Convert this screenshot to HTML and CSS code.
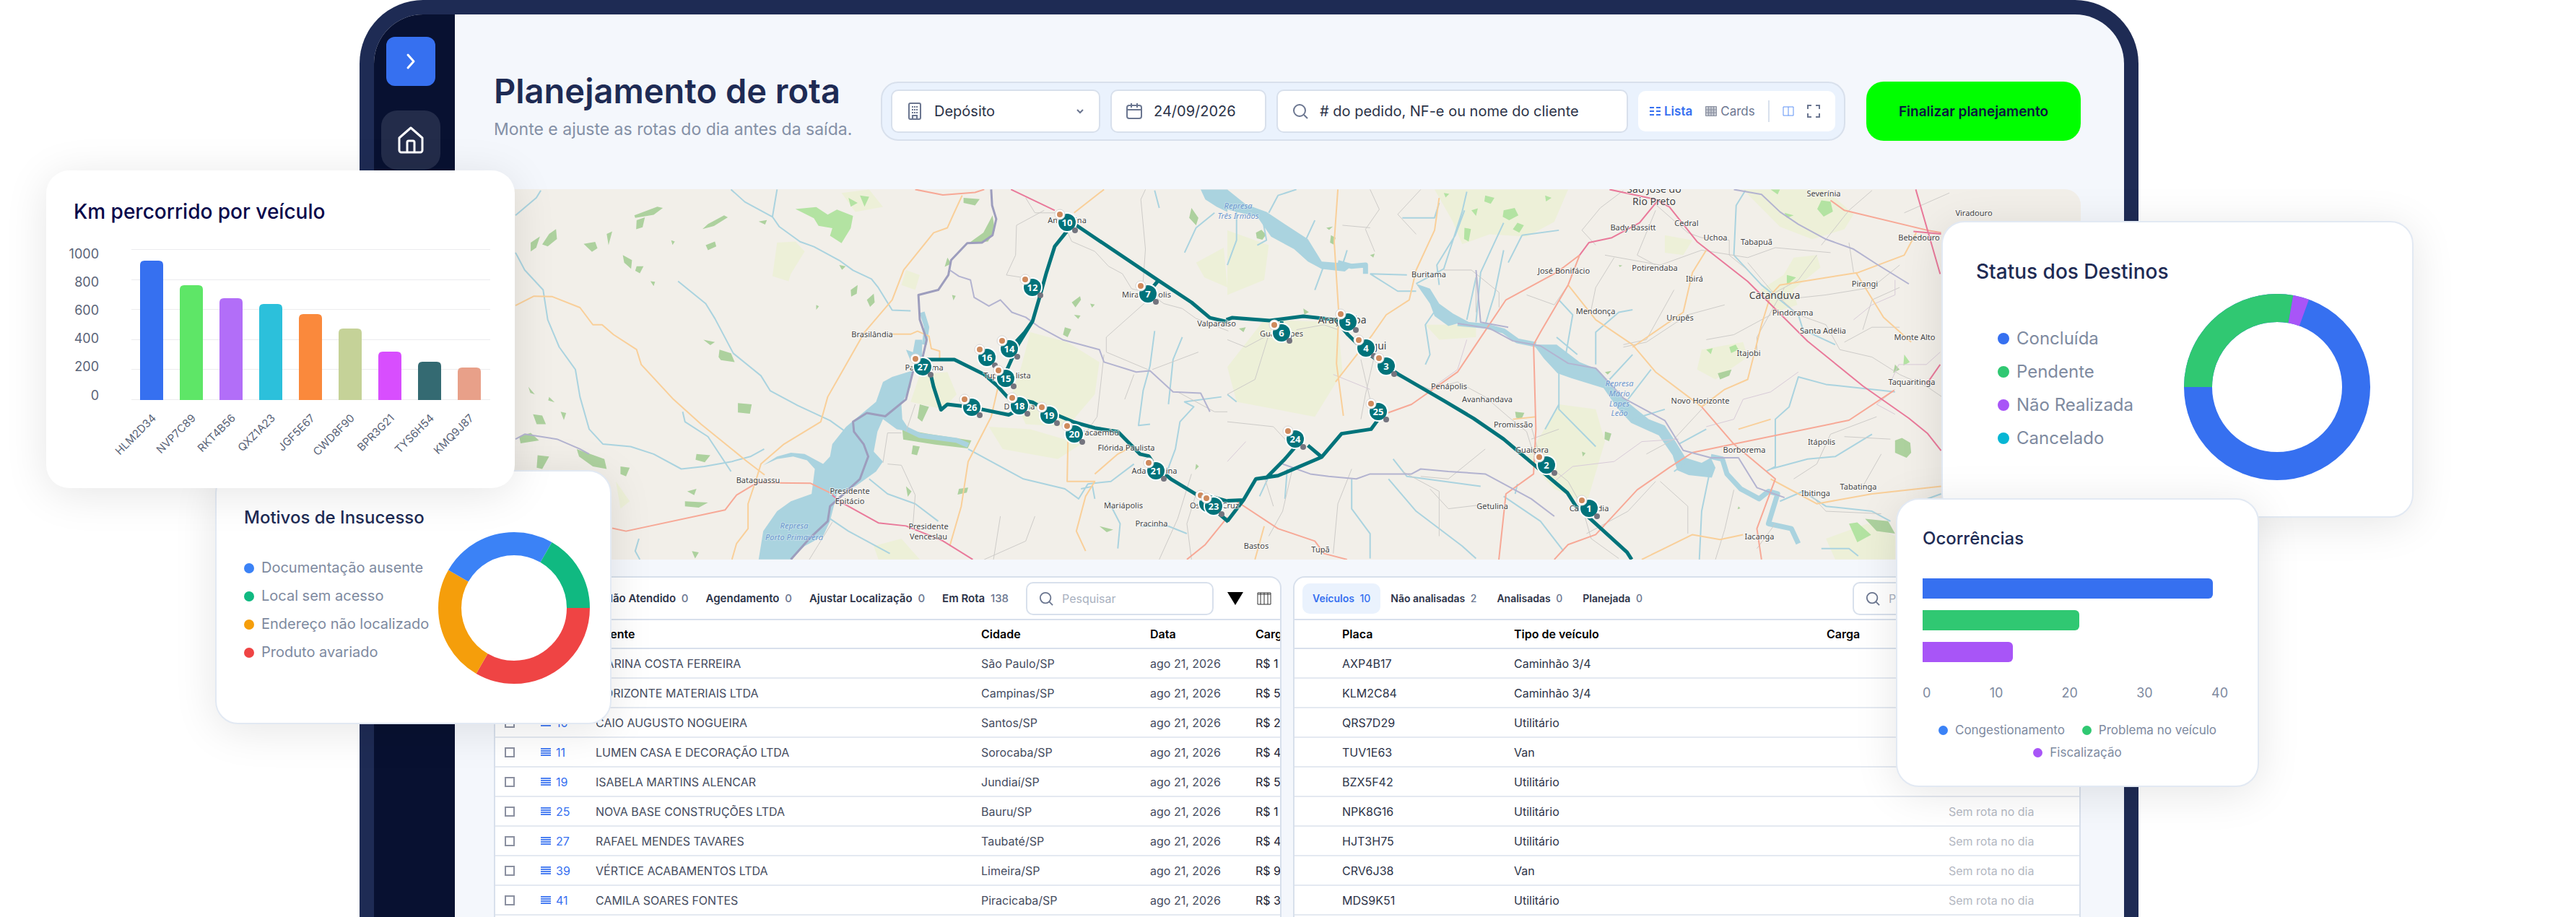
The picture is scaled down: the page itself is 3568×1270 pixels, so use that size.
FILE: index.html
```html
<!DOCTYPE html>
<html lang="pt-BR">
<head>
<meta charset="utf-8">
<title>Planejamento de rota</title>
<link rel="stylesheet" href="styles.css">
</head>
<body>
<div class="hero">
  <div class="frame">
    <nav class="sidebar">
      <button class="expand" type="button" aria-label="Expandir menu"><svg width="28" height="28" viewBox="0 0 28 28"><path d="M10 5l8 9-8 9" fill="none" stroke="#fff" stroke-width="3" stroke-linecap="round" stroke-linejoin="round"/></svg></button>
      <a class="home" href="#" aria-label="Início"><svg width="40" height="40" viewBox="0 0 40 40" fill="none" stroke="#fff" stroke-width="3" stroke-linejoin="round" stroke-linecap="round"><path d="M4 17L20 3l16 14v17a3 3 0 0 1-3 3H7a3 3 0 0 1-3-3z"/><path d="M15 36V23a2 2 0 0 1 2-2h6a2 2 0 0 1 2 2v13"/></svg></a>
    </nav>
    <main class="main">
      <header class="top">
        <div class="heading">
          <h1>Planejamento de rota</h1>
          <p>Monte e ajuste as rotas do dia antes da saída.</p>
        </div>
        <form class="filters">
          <label class="field depot">
            <svg width="22" height="24" viewBox="0 0 22 24" fill="none" stroke="#6b7690" stroke-width="2"><rect x="3" y="1" width="16" height="22" rx="2"/><path d="M8 22v-4h6v4"/><path d="M7 6h8M7 10h8M7 14h8" stroke-dasharray="2 1"/></svg>
            <select aria-label="Depósito"><option>Depósito</option></select>
            <svg width="12" height="12" viewBox="0 0 12 12"><path d="M2 4l4 4 4-4" fill="none" stroke="#6b7690" stroke-width="2"/></svg>
          </label>
          <label class="field date">
            <svg width="22" height="24" viewBox="0 0 22 24" fill="none" stroke="#6b7690" stroke-width="2"><rect x="1" y="4" width="20" height="18" rx="3"/><path d="M1 10h20M7 1v6M15 1v6"/></svg>
            <input type="text" value="24/09/2026" aria-label="Data">
          </label>
          <label class="field search">
            <svg width="22" height="22" viewBox="0 0 22 22" fill="none" stroke="#6b7690" stroke-width="2"><circle cx="10" cy="10" r="8"/><path d="M16 16l5 5"/></svg>
            <input type="text" placeholder="# do pedido, NF-e ou nome do cliente" aria-label="Buscar">
          </label>
          <div class="views">
            <button class="view on" type="button"><svg width="15" height="14" viewBox="0 0 15 14" stroke="#3670f0" stroke-width="2"><path d="M0 2h6M9 2h6M0 7h6M9 7h6M0 12h6M9 12h6"/></svg>Lista</button>
            <button class="view" type="button"><svg width="16" height="14" viewBox="0 0 16 14" stroke="#8a90a0" stroke-width="1" fill="#c3c7d0"><path d="M.5.5h15v13H.5zM4.500 0v14M8 0v14M11.500 0v14M0 5h16M0 9h16"/></svg>Cards</button>
            <span class="sep"></span>
            <button class="view" type="button" aria-label="Dividir"><svg width="16" height="14" viewBox="0 0 16 14" stroke="#5f92f5" fill="none"><path d="M1 1h14v12H1zM8 1v12"/></svg></button>
            <button class="view" type="button" aria-label="Tela cheia"><svg width="18" height="18" viewBox="0 0 18 18" stroke="#6b7690" stroke-width="2" fill="none"><path d="M1 6V1h5M12 1h5v5M17 12v5h-5M6 17H1v-5"/></svg></button>
          </div>
        </form>
        <button class="finish" type="button">Finalizar planejamento</button>
      </header>

      <svg class="map" viewBox="684 262 2198 513" preserveAspectRatio="xMidYMid slice" role="img" aria-label="Mapa da rota">
        <defs>
          <g id="pin"><circle r="14" fill="#fff"/><circle r="12" fill="#00737a"/><circle cx="-10" cy="-11" r="7" fill="#fff" stroke="#d5d5d5"/><circle cx="-10" cy="-11" r="4" fill="#cf8a5d"/><circle cx="11" cy="11" r="4" fill="#74747e"/></g>
        </defs>
        <rect x="684" y="262" width="2198" height="513" fill="#f2efe9"/>
        <g class="geo" transform="translate(700 250) scale(.6378 .3444)">
          <g class="meadow">
            <path d="M590 250l40-5 20 40-30 90-5 30-35-20zM1140 610l80 40 70 80-10 130-60 130-90-10-30-120 20-110zM900 780l60-10 20 90-30 60-70-30zM1050 990l90 10 110 60-50 60-120-40zM870 360l30 20-10 60-30-20zM240 1210l30 80-20 30zM1500 330l60-60 8 160-50-40zM730 50l60-14 30 70-60 20zM800 1470l60-30 40 84h-90z"/>
          </g>
          <g class="wood">
            <path d="M280 140l50-35 12 5-20 28-40 12zM170 255l25-8 5 25-12 15zM285 160l18-12-5 40-14 8zM360 240l8 5-5 14zM440 175l35-35 8 8-30 35-25 12zM95 215l15-20 2 40-20 30-12-8zM55 250l20-25-8 45-12 15zM220 215l12-10-8 55zM255 300l20 20-2 35-15-25zM285 345l15 0-8 28-10-10zM435 260l20-15 3 20-18 15zM315 405l10 2-3 18zM750 440l15-20-2 35-12 12zM785 480l15-25 2 35-10 18zM465 680l25 15 8 35-30-8-5-12zM505 895l30 5-4 38-26-5zM430 640l25 10-10 12zM60 940l20 5 8 35-20 0zM120 930l12 5-5 28zM50 830l14 30-10-6zM95 870l12 22-14-8zM70 1105l25 5-15 50-12-5zM30 1030l25-15 18 30-40 12zM155 1080l60 40 5 40-30-10-30-40zM250 1150l20 5-8 35-12-10zM415 1100l30 5-12 28-20-10zM395 1250l20-10-5 25zM390 1290l50 5-20 20-30-5zM405 1490l15 5-8 25zM862 1000l60 20 90 25-8 32-70-15-70-20zM885 1065l15 5-6 35-12-5zM900 900l20 10-15 60-10-15zM1058 140l5 60-15 45-40 5 30-40zM995 70l35 5-10 25-25-10zM985 1240l20-5-3 20-20 8zM870 1230l12 20-8 22zM1215 590l14 8-8 32-10-10zM1230 490l18-25 2 15-12 30zM1235 540l14 3-5 14zM1270 495l10 4-6 12zM1490 110l15 40-5 30-15-30zM960 310l8 25-14 12zM725 340l14 5-8 14zM550 165l18-6-4 18zM970 460l8 4-5 18zM675 500l6 6-6 14zM1290 1390l30 14-14 10zM1500 1140l6 10-8 14z"/>
            <path class="bright" d="M630 115l45-8 25 30 20-20 35 25-5 50-20 60-25-30 5-30-30-10-10-30zM770 60l20 5-10 40zM745 70l20 20-15 15z"/>
          </g>
          <path class="water" d="M883 765l-43 25-20 20-15 80-65 100-30 70-5 50-15 30-40-40-30-5-30 15-30 35 30-25 35-10 30 15 17 35-7 100-45 30-30 40-30 80-10 114h70l30-54 40-40 15-60 15-110 40-30 45-60 15-40-20-40 8-80 12-50 30 40 30 10-18-50-2-60 20-70zM890 640l-5 50-15-10 10 45 25 5V640zM1510 36l10 40 25 30 23 20V36z"/>
          <path class="river big" d="M905 530l10 60-5 70M860 990l40 35 80 20 25 20"/>
          <path class="river" d="M490 36l30 50 60 60 10-110M580 146l15 40 45 60 30 20 55 55 30 40 40 35 15 35 30 90 40 3M22 140l45-70 10-30M22 290l20 70 40 80 10 120 25 110 35 90 10 110 20 130 30 60 60 10 50 30 60 60 50-10 60-20 40-20 30-30M375 405l60 90 20 60 40 140 60 90 20 60 60 60 70 60 30 40M385 930l5 40 50 60 50 140M1005 1080l60 60 60 60 90 40 30 40 20-60 50-10 50-70M1400 980l-25 5 10-140 15-100 10-140M1440 900l10-180 20-90M1435 1180l20-100 10-110 30-60-20-20 80-20M290 1440l-8 50 10 34M790 1200l40 60 60 40 50 70M705 1360l40 50 90 90M1540 130l-40 60-25 100M1410 40l10 70M1310 1290l25 90-5 100M1380 1390l60 0 40 30M1250 1240l25-10 5 50"/>
          <path class="grey" d="M1170 120l-60 60-2 120-20 80 70 20M1130 70l20 60 50 0M1220 205l10 40 50 40 30 60 30 30 20 60 40 20 30 40 40 20 30 40 70 50M1390 36l-10 40 10 200-5 130M1390 490l-85 140 0 60 90 70M1405 760l100-70M830 1140l30 5 30 120-5 124M860 1015h-30l-10 120M890 900l-20 110M1075 1350l-15 174M1300 700l-15 250-30 80M1150 1350l-20 100-90 74M1490 1180l-30 180-40 164M1500 1260l-20 120 10 144M1460 850l80 80 28 0M1365 780l-20 100M660 1524l20-60 30-90"/>
          <path class="yellow" d="M22 503l40-38 40 2 60 44 28 69 20 0 25 40 50 60 10 60 70 140 60 100 60 90 40 60 38 54M992 60l-20 80-12 50-30 20-65 150-25 120-60 130-80 260-15 100-80 90-50 80-10 60-18 100 0 100-25 60-10 64M840 618l40 0 15-12 25 20 5 50 18 10 0 40M1075 790l-20 160-50 180-15 180-25 160M1235 130l65-94M1222 1020l-2 190 60 0-20 60-20 140 20 80M1280 1180l50-80 30-30"/>
          <path class="salmon" d="M232 1398l30 12 215-85 25-60 45-50 115 2 50 45M890 36l60 22 70-10 20-12M1480 1524l40-60 48-110"/>
          <path class="pink" d="M710 1265l20 30 80 82 60 12 80 60 65 75M1098 36l95 84"/>
          <path class="border" d="M1055 36l2 64 9 55-8 65-23 30-32 2-35 68-6 60-22 60-43 20 3 100 15 80-10 80-20 50-15 110-45 68-40-13-30 35 2 40 21 50 10 50-18 90-35 60-30 50-5 60-40 70-40 84"/>
          <path class="border thin" d="M965 360l20 25 25 15 8 70 32 35 25-25 25 50 30 20 30 40 50 50 80 40 10 50 70 40 30-5 50 85 60 5 20 75M22 1040l20-20 70 20 50 40 20 20"/>
        </g>
        <g class="geo" transform="translate(1700 250) scale(.6378 .3444)">
          <g class="meadow">
            <path d="M450 36h290l-30 130-60 60-80-10-60 40-20-90zM1120 36h180l60 100-20 60-70 40-70-50zM1230 310l50-10 8 50-60 90 10 60-50 30-30-90 50-60zM1030 680l90-30 10 60-70 90-40-40zM720 900l80 20 20 130-40 250-70-60-60-120zM80 560l160 10 10 200-60 180-170-60-20-140zM0 200l90 60-10 140-80 60zM430 580l110 0 0 50-80 10zM1300 1440l90-60 60 50v94h-130zM950 220l60 20-20 60-40-10z"/>
          </g>
          <g class="wood">
            <path d="M62 210l12-12 10 20-8 20-12-6zM225 220l10 10-4 28-8-8zM820 1010l14 8-5 30-10-8zM625 930l20 4-6 24-12-4zM1450 1045l15-10 18 20 2 40-10 20-25-20zM1385 1360l50 10 15 50-40-10zM25 595l15-5-5 20zM215 190l14-5-8 14zM770 1090l8 6-6 14zM820 770l14-4-8 14zM1065 775l30-15-5 25-20 15zM1450 740l10 20-14 14zM310 300l10-6-3 16zM850 340l8 2-6 6zM165 515l12 14-10 10zM1110 1310l4 8-6 4z"/>
            <path class="bright" d="M560 60l20 10-8 24-14-10zM600 120l24-10 8 30-20 20-14-14zM630 170l14 10-10 30-14-14zM530 120l14-8-4 30zM470 50l12 4-8 14zM690 60l14 10-12 14zM515 190l14 5-5 50-10-10zM1290 80l20 5 5 40-20 20-14-30zM1210 130l20 10-15 10zM1350 1380l18-5 30 50-30 30zM1215 380l20 10-20 30zM1040 680l14-6-4 24zM1090 670l14-10 6 20-16 14zM1470 700l12 30-14 14zM1180 36l20 0-5 20z"/>
          </g>
          <path class="water" d="M0 36l40 60 45 30 40 50 50 60 30 90 70 10-20 30-50-10-30-30-30-50-50-50-30-80-45-20-20-10zM410 415l30 20 20 60 30 40 40 40-30 0-20 10-30-40-10-50zM665 660l50 0 50 70 40 30 30 60 40 80 40 60 35 25 25 70 20 60 35 20 20-20 10 40-8 40-50-10-25-20-10-60-30-80-60-50-30-60-30-80-70-40-30-20-30-60z"/>
          <path class="river big" d="M240 330l30 15 30-5 0 35M500 575l60 10 40 20 30 40 40 15M1050 1110l25 10 10 60 30 60 40 40 20-30 20 10-10 60-10 60 50 20 15 60"/>
          <path class="river" d="M90 130l20-70 40-24M170 240l20-80M20 120v120l-20 100M75 140l10 100-20 20M310 375l80 5M250 340l10-60M210 340l-20 100M310 375l60 70 40 0M410 415l60-60 40-230 10-80M460 420l-5-80 40-120 20-100M460 500l-30 80 10 120-10 40M520 560l20-170M560 580l20-120 20-180M600 170l-50 200-10 200M640 220l-30 110M380 150l70 0 10-60M640 220l80-20M735 700l15-160-30-60M800 740l0-130 50-80 30-10M760 700l-45-70M830 800l50-100M870 880l50-120M720 740l0 180 80 150M720 900l-30 100M880 960l70-40M980 1060l60-60M1100 300l5-200 20-60M1100 300l60 120 80 120 10 60 70 60M1050 1150l-20 180-5 194M1000 1130l-30 40M1170 1170l20-20 0-190 30-50 20-120 60 30 150 30M1180 1160l80-40 60-10 80-90M360 1120l30 70 160 40M270 1200l0 120 40 100 0 100M350 1200l60 130 100 140 30 50M600 1270l80 100 50 120M1200 1290l50-40 50 60 100 20 40 40M1290 1480l60 0 20 30M90 1190l-20 80M130 1160l-5 120M0 860l20 30M630 1220l-5 40M1550 1260l-60 40"/>
          <path class="grey" d="M420 36l-50 100 40 80M310 36l20 80-30 80 20 90M250 180l60 10M470 360l60 0 60 90 0 60M540 380l0 150M860 40l-50 70-40 90 30 60M840 310l-40 120-10 90M740 420l-30 80-60-40M820 300l60 20 60 20 90-60M970 440l-60 200-50 20M1030 280l100 30 60-40 120 20M930 120l-40 180 40 40M1080 500l-80 40-90 110-50 20M1180 540l-80 80-60 20M1210 430l-60 200 0 70M1280 300l-40 100-60 60M1290 260l60-140 50-80M1200 480l100-20 100-30 60-90M1350 250l10 120M1380 600l20-120 60-50M1340 650l60-60 60 0M1470 130l98-80M360 780l80 60 60-30 60 60 50 80 40 60 15 90M320 700l-20 160-10 100M310 880l-20-160M90 620l-30 180-60 60M0 640l40 30 50-50M150 600l60-20 30 20M0 970l100 20 30 60M80 1190l20 120M140 1170l-20 160-30 100M270 1160l-30 140-10 200M380 1170l80 80 0 180M440 1240l40 80 90-20M560 1080l-80 120-60-10M660 990l20 130 60 90 30 100 20 130 60 80M720 1000l-60 40M1030 920l-60 120-60 60M940 1210l60 100 0 110M930 1210l-60 120-90 90M1060 1524l20-120 20-160M1310 1020l-30 120-50 60M1310 1020l100-70M1340 1030l100 10M1260 1250l40 80 120 10M1420 1100l-40 130M1190 1380l-40 100M1130 330l50 110 60 100 60 40 30 100 70 30 60 70 60 50 48 60M920 80l80 130 30 20 60 10 0 60 40 60"/>
          <path class="violet" d="M980 1040l-80 10-60 80-90 20-40 60M1240 770l-60 80-60 30-20 80-60 30M1360 560l40-60 50-40 0-60M1548 690l-30 50-60 0-20 80M1450 840l-40 60 40 40M0 1130l40-80M230 780l80 60M520 640l-20 120-60 80"/>
          <path class="yellow" d="M240 36l-8 210 10 290-5 200 15 210M460 70l-10 130-40 160-15 120-50 60-30 80-80 190M740 420l60 140 80 100 50 110 100 140M1040 280l-30 90-20 160-110 140M1030 910l50-70 50-40 30-220 20-120 20-40 170-50 100-70 26-90M1365 370l60 180 60 100M1180 1200l50 50 50 50 120-40 150-30M900 1524l110-100 60 20 50-20M620 960l50-10M80 1390l-20 134M1110 1000l70-40"/>
          <path class="salmon" d="M340 940l60-40 100-130 105-290 110-110 50-70M740 420l-60 190-15 50 5 340-5 180-60 80-20 344M765 300l-25 120M740 420l25-120M710 1524l30-60 60-40 90-180 70-90 50-60 340-130 98-120M1030 910l70 150 90 140-20 100-20 100 10 124M1310 80l30 40 180 80 30 10M20 1290l90 110 80 50 20 50 50 24"/>
          <path class="pink" d="M830 36l100 40 30 30 60 140 110 160 130 240 120 180 100 130 40 60 30 70M935 80l-40 90-60 60-50 20-20 50M1495 36l53 340M1548 740l-30 80M1490 205l60 10"/>
          <path class="border thin" d="M370 1180l30 0 20-20 60 10 80 10 40 40 60 60 50 70M120 1140l60 40 40 10 60 10 30-20 60 0M540 360l10 210 60 20M1100 36l60 20 40 70 40 50 60 60 60 40 50 60 70 80"/>
          <path class="border thin" d="M500 575l70 20 50 50 60 20 60 70 60 20 60 120 90 90 40 120 60 30 60 0 40 120 60 40"/>
        </g>
        <g class="geo route" transform="translate(700 250) scale(.6378 .3444)">
          <path d="M1568 568l-38-16-40-62-72-88-178-222M1418 402l-22 50M1219 205l-26 60-18 105-15 100-15 95-30 90-28 115-19 55M1145 565l-17 45-20 40M906 720h69l65 60 28 45 22 45 27 20M925 790l5 40 16 92 14-22 53 12 80 30 24-22M1117 880l28 12 36 38 54 42 45 23 50 15 48 90 19 8 15 42 33 50 55 62 70 110M1500 1262l40 13 28 15"/>
        </g>
        <g class="geo route" transform="translate(1700 250) scale(.6378 .3444)">
          <path d="M878 1524l-10-29-83-140-28-45-19-55-45-70-93-145-65-83-65-72-98-105-27-33-44-57-39-70-27-60-70-14-73 17-82-11-12 8M118 560v30M0 1370l35-85 27-85 23-5 40-75 23-50M62 1200l48-13 95-75 43-94 64-18 16-40M175 1065l30 47M0 1288l35-3"/>
        </g>
        <g class="place">
          <text x="1208" y="467">Brasilândia</text><text x="1280" y="513">Panorama</text><text x="1050" y="669">Bataguassu</text>
          <text x="1177" y="684">Presidente</text><text x="1177" y="698">Epitácio</text>
          <text x="1286" y="733">Presidente</text><text x="1286" y="747">Venceslau</text>
          <text x="1478" y="309">Andradina</text><text x="1588" y="412">Mirandópolis</text><text x="1685" y="452">Valparaíso</text>
          <text x="1395" y="524">Tupi Paulista</text><text x="1412" y="567">Dracena</text><text x="1523" y="603">Pacaembu</text>
          <text x="1560" y="624">Flórida Paulista</text><text x="1599" y="656">Adamantina</text><text x="1556" y="704">Mariápolis</text>
          <text x="1595" y="729">Pracinha</text><text x="1682" y="704">Osvaldo Cruz</text>
          <text x="1979" y="384">Buritama</text><text x="2166" y="379">José Bonifácio</text><text x="2292" y="375">Potirendaba</text>
          <text x="2347" y="390">Ibirá</text><text x="2262" y="319">Bady Bassitt</text><text x="2336" y="313">Cedral</text>
          <text x="2376" y="333">Uchoa</text><text x="2433" y="339">Tabapuã</text><text x="2526" y="272">Severínia</text>
          <text x="2734" y="299">Viradouro</text><text x="2658" y="333">Bebedouro</text><text x="2210" y="435">Mendonça</text>
          <text x="2483" y="437">Pindorama</text><text x="2583" y="397">Pirangi</text><text x="2327" y="444">Urupês</text>
          <text x="2525" y="462">Santa Adélia</text><text x="2652" y="471">Monte Alto</text><text x="2422" y="493">Itajobi</text>
          <text x="1775" y="466">Guararapes</text><text x="2007" y="539">Penápolis</text><text x="2060" y="557">Avanhandava</text>
          <text x="2096" y="592">Promissão</text><text x="2122" y="627">Guaiçara</text><text x="2067" y="705">Getulina</text>
          <text x="2201" y="708">Cafelândia</text><text x="2355" y="559">Novo Horizonte</text><text x="2648" y="533">Taquaritinga</text>
          <text x="2416" y="627">Borborema</text><text x="2523" y="616">Itápolis</text><text x="2515" y="687">Ibitinga</text>
          <text x="2574" y="678">Tabatinga</text><text x="2437" y="747">Iacanga</text><text x="1740" y="760">Bastos</text><text x="1829" y="765">Tupã</text>
        </g>
        <g class="place city">
          <text x="2291" y="267">São José do</text><text x="2291" y="284">Rio Preto</text><text x="2458" y="414">Catanduva</text>
          <text x="1859" y="448">Araçatuba</text><text x="1899" y="484">Birigui</text>
        </g>
        <g class="place lake">
          <text x="1100" y="732">Represa</text><text x="1100" y="748">Porto Primavera</text>
          <text x="1715" y="289">Represa</text><text x="1715" y="303">Três Irmãos</text>
          <text x="2243" y="535">Represa</text><text x="2243" y="549">Mário</text><text x="2243" y="563">Lopes</text><text x="2243" y="576">Leão</text>
        </g>
        <g class="pins">
          <g transform="translate(1478 308)"><use href="#pin"/><text y="5">10</text></g>
          <g transform="translate(1430 398)"><use href="#pin"/><text y="5">12</text></g>
          <g transform="translate(1590 407)"><use href="#pin"/><text y="5">7</text></g>
          <g transform="translate(1398 483)"><use href="#pin"/><text y="5">14</text></g>
          <g transform="translate(1367 495)"><use href="#pin"/><text y="5">16</text></g>
          <g transform="translate(1393 524)"><use href="#pin"/><text y="5">15</text></g>
          <g transform="translate(1278 508)"><use href="#pin"/><text y="5">27</text></g>
          <g transform="translate(1346 564)"><use href="#pin"/><text y="5">26</text></g>
          <g transform="translate(1412 562)"><use href="#pin"/><text y="5">18</text></g>
          <g transform="translate(1453 575)"><use href="#pin"/><text y="5">19</text></g>
          <g transform="translate(1488 601)"><use href="#pin"/><text y="5">20</text></g>
          <g transform="translate(1601 652)"><use href="#pin"/><text y="5">21</text></g>
          <g transform="translate(1673 697)"><use href="#pin"/></g>
          <g transform="translate(1681 701)"><use href="#pin"/><text y="5">23</text></g>
          <g transform="translate(1867 446)"><use href="#pin"/><text y="5">5</text></g>
          <g transform="translate(1775 461)"><use href="#pin"/><text y="5">6</text></g>
          <g transform="translate(1892 482)"><use href="#pin"/><text y="5">4</text></g>
          <g transform="translate(1920 507)"><use href="#pin"/><text y="5">3</text></g>
          <g transform="translate(1909 570)"><use href="#pin"/><text y="5">25</text></g>
          <g transform="translate(1794 608)"><use href="#pin"/><text y="5">24</text></g>
          <g transform="translate(2142 644)"><use href="#pin"/><text y="5">2</text></g>
          <g transform="translate(2201 704)"><use href="#pin"/><text y="5">1</text></g>
        </g>
      </svg>

      <div class="panels">
        <section class="panel">
          <div class="tools orders">
            <button class="tab" type="button">Não Atendido <span>0</span></button>
            <button class="tab" type="button">Agendamento <span>0</span></button>
            <button class="tab" type="button">Ajustar Localização <span>0</span></button>
            <button class="tab" type="button">Em Rota <span>138</span></button>
            <label class="find">
              <svg width="20" height="20" viewBox="0 0 22 22" fill="none" stroke="#6b7690" stroke-width="2"><circle cx="10" cy="10" r="8"/><path d="M16 16l5 5"/></svg>
              <input type="text" placeholder="Pesquisar" aria-label="Pesquisar pedidos">
            </label>
            <button class="tool" type="button" aria-label="Filtrar"><svg width="22" height="20" viewBox="0 0 22 20"><path d="M0 1h22L11 19z" fill="#000"/></svg></button>
            <button class="tool" type="button" aria-label="Colunas"><svg width="20" height="18" viewBox="0 0 20 18" fill="none" stroke="#333"><path d="M1 1h18v16H1zM5 1v16M10 1v16M15 1v16M1 3h18"/></svg></button>
          </div>
          <table class="grid-orders">
            <colgroup><col class="c-check"><col class="c-num"><col><col class="c-city"><col class="c-date"><col class="c-load"></colgroup>
            <thead><tr><th></th><th></th><th>Cliente</th><th>Cidade</th><th>Data</th><th>Carga</th></tr></thead>
            <tbody>
              <tr><td><input type="checkbox" aria-label="Pedido 8"></td><td class="num"><i></i>8</td><td>MARINA COSTA FERREIRA</td><td>São Paulo/SP</td><td>ago 21, 2026</td><td class="load">R$ 1</td></tr>
              <tr><td><input type="checkbox" aria-label="Pedido 9"></td><td class="num"><i></i>9</td><td>HORIZONTE MATERIAIS LTDA</td><td>Campinas/SP</td><td>ago 21, 2026</td><td class="load">R$ 5</td></tr>
              <tr><td><input type="checkbox" aria-label="Pedido 10"></td><td class="num"><i></i>10</td><td>CAIO AUGUSTO NOGUEIRA</td><td>Santos/SP</td><td>ago 21, 2026</td><td class="load">R$ 2</td></tr>
              <tr><td><input type="checkbox" aria-label="Pedido 11"></td><td class="num"><i></i>11</td><td>LUMEN CASA E DECORAÇÃO LTDA</td><td>Sorocaba/SP</td><td>ago 21, 2026</td><td class="load">R$ 4</td></tr>
              <tr><td><input type="checkbox" aria-label="Pedido 19"></td><td class="num"><i></i>19</td><td>ISABELA MARTINS ALENCAR</td><td>Jundiaí/SP</td><td>ago 21, 2026</td><td class="load">R$ 5</td></tr>
              <tr><td><input type="checkbox" aria-label="Pedido 25"></td><td class="num"><i></i>25</td><td>NOVA BASE CONSTRUÇÕES LTDA</td><td>Bauru/SP</td><td>ago 21, 2026</td><td class="load">R$ 1</td></tr>
              <tr><td><input type="checkbox" aria-label="Pedido 27"></td><td class="num"><i></i>27</td><td>RAFAEL MENDES TAVARES</td><td>Taubaté/SP</td><td>ago 21, 2026</td><td class="load">R$ 4</td></tr>
              <tr><td><input type="checkbox" aria-label="Pedido 39"></td><td class="num"><i></i>39</td><td>VÉRTICE ACABAMENTOS LTDA</td><td>Limeira/SP</td><td>ago 21, 2026</td><td class="load">R$ 9</td></tr>
              <tr><td><input type="checkbox" aria-label="Pedido 41"></td><td class="num"><i></i>41</td><td>CAMILA SOARES FONTES</td><td>Piracicaba/SP</td><td>ago 21, 2026</td><td class="load">R$ 3</td></tr>
            </tbody>
          </table>
        </section>
        <section class="panel">
          <div class="tools fleet">
            <button class="tab active" type="button">Veículos <span>10</span></button>
            <button class="tab" type="button">Não analisadas <span>2</span></button>
            <button class="tab" type="button">Analisadas <span>0</span></button>
            <button class="tab" type="button">Planejada <span>0</span></button>
            <label class="find">
              <svg width="20" height="20" viewBox="0 0 22 22" fill="none" stroke="#6b7690" stroke-width="2"><circle cx="10" cy="10" r="8"/><path d="M16 16l5 5"/></svg>
              <input type="text" placeholder="Pesquisar" aria-label="Pesquisar veículos">
            </label>
          </div>
          <table class="grid-fleet">
            <colgroup><col class="f-lead"><col class="f-plate"><col><col class="f-load"><col class="f-state"></colgroup>
            <thead><tr><th></th><th>Placa</th><th>Tipo de veículo</th><th>Carga</th><th></th></tr></thead>
            <tbody>
              <tr><td></td><td>AXP4B17</td><td>Caminhão 3/4</td><td></td><td class="muted">Sem rota no dia</td></tr>
              <tr><td></td><td>KLM2C84</td><td>Caminhão 3/4</td><td></td><td class="muted">Sem rota no dia</td></tr>
              <tr><td></td><td>QRS7D29</td><td>Utilitário</td><td></td><td class="muted">Sem rota no dia</td></tr>
              <tr><td></td><td>TUV1E63</td><td>Van</td><td></td><td class="muted">Sem rota no dia</td></tr>
              <tr><td></td><td>BZX5F42</td><td>Utilitário</td><td></td><td class="muted">Sem rota no dia</td></tr>
              <tr><td></td><td>NPK8G16</td><td>Utilitário</td><td></td><td class="muted">Sem rota no dia</td></tr>
              <tr><td></td><td>HJT3H75</td><td>Utilitário</td><td></td><td class="muted">Sem rota no dia</td></tr>
              <tr><td></td><td>CRV6J38</td><td>Van</td><td></td><td class="muted">Sem rota no dia</td></tr>
              <tr><td></td><td>MDS9K51</td><td>Utilitário</td><td></td><td class="muted">Sem rota no dia</td></tr>
            </tbody>
          </table>
        </section>
      </div>
    </main>
  </div>

  <section class="card reasons">
    <div>
      <h2>Motivos de Insucesso</h2>
      <ul class="legend">
        <li><i class="dot sky"></i>Documentação ausente</li>
        <li><i class="dot emerald"></i>Local sem acesso</li>
        <li><i class="dot amber"></i>Endereço não localizado</li>
        <li><i class="dot red"></i>Produto avariado</li>
      </ul>
    </div>
    <svg class="donut" width="210" height="210" viewBox="-105 -105 210 210" fill="none" stroke-width="32">
      <circle r="89" pathLength="360" stroke="#ef4444" stroke-dasharray="120 240"/>
      <circle r="89" pathLength="360" stroke="#f59e0b" stroke-dasharray="90 270" stroke-dashoffset="-120"/>
      <circle r="89" pathLength="360" stroke="#3b82f6" stroke-dasharray="90 270" stroke-dashoffset="-210"/>
      <circle r="89" pathLength="360" stroke="#10b981" stroke-dasharray="60 300" stroke-dashoffset="-300"/>
    </svg>
  </section>

  <section class="card distance">
    <h2>Km percorrido por veículo</h2>
    <svg class="bars" viewBox="0 0 649 365">
      <path d="M118 34.500h497M118 76.500h497M118 117.500h497M118 159.500h497M118 200.500h497M118 242.500h497" stroke="#ececee" fill="none"/>
      <g class="axis-y"><text x="73" y="47">1000</text><text x="73" y="86">800</text><text x="73" y="125">600</text><text x="73" y="164">400</text><text x="73" y="203">200</text><text x="73" y="243">0</text></g>
      <path fill="#3670f0" d="M130 243V56q0-6 6-6h20q6 0 6 6v187z"/>
      <path fill="#5ee667" d="M185 243V90q0-6 6-6h20q6 0 6 6v153z"/>
      <path fill="#b26ef8" d="M240 243V108q0-6 6-6h20q6 0 6 6v135z"/>
      <path fill="#2cc0db" d="M295 243V116q0-6 6-6h20q6 0 6 6v127z"/>
      <path fill="#fa893c" d="M350 243V130q0-6 6-6h20q6 0 6 6v113z"/>
      <path fill="#c5d298" d="M405 243v-93q0-6 6-6h20q6 0 6 6v93z"/>
      <path fill="#d84efe" d="M460 243v-61q0-6 6-6h20q6 0 6 6v61z"/>
      <path fill="#346a72" d="M515 243v-47q0-6 6-6h20q6 0 6 6v47z"/>
      <path fill="#e8a089" d="M570 243v-39q0-6 6-6h20q6 0 6 6v39z"/>
      <g class="axis-x">
        <text transform="translate(153 269) rotate(-45)">HLM2D34</text><text transform="translate(208 269) rotate(-45)">NVP7C89</text><text transform="translate(263 269) rotate(-45)">RKT4B56</text><text transform="translate(318 269) rotate(-45)">QXZ1A23</text><text transform="translate(373 269) rotate(-45)">JGF5E67</text><text transform="translate(428 269) rotate(-45)">CWD8F90</text><text transform="translate(483 269) rotate(-45)">BPR3G21</text><text transform="translate(538 269) rotate(-45)">TYS6H54</text><text transform="translate(593 269) rotate(-45)">KMQ9J87</text>
      </g>
    </svg>
  </section>

  <section class="card status">
    <div>
      <h2>Status dos Destinos</h2>
      <ul class="legend">
        <li><i class="dot blue"></i>Concluída</li>
        <li><i class="dot green"></i>Pendente</li>
        <li><i class="dot purple"></i>Não Realizada</li>
        <li><i class="dot cyan"></i>Cancelado</li>
      </ul>
    </div>
    <svg class="donut" width="258" height="258" viewBox="-129 -129 258 258" fill="none" stroke-width="39">
      <circle r="109.500" pathLength="360" stroke="#3670f0"/>
      <circle r="109.500" pathLength="360" stroke="#30c872" stroke-dasharray="100 260" stroke-dashoffset="-180"/>
      <circle r="109.500" pathLength="360" stroke="#a855f7" stroke-dasharray="10 350" stroke-dashoffset="-280"/>
    </svg>
  </section>

  <section class="card events">
    <h2>Ocorrências</h2>
    <div class="hbars">
      <div class="hbar blue" style="width:402px"></div>
      <div class="hbar green" style="width:217px"></div>
      <div class="hbar purple" style="width:125px"></div>
    </div>
    <div class="scale"><span>0</span><span>10</span><span>20</span><span>30</span><span>40</span></div>
    <ul class="legend">
      <li><i class="dot sky"></i>Congestionamento</li>
      <li><i class="dot green"></i>Problema no veículo</li>
      <li><i class="dot purple"></i>Fiscalização</li>
    </ul>
  </section>
</div>
</body>
</html>
```
FILE: styles.css
```css
* { box-sizing: border-box; }
body { margin: 0; background: #fff; color: #1e2b54; font-family: Inter, "Open Sans", sans-serif; }
h1, h2, p, ul { margin: 0; padding: 0; }
ul { list-style: none; }
button { border: 0; padding: 0; background: none; font: inherit; color: inherit; cursor: pointer; }
input, select { font: inherit; color: inherit; border: 0; background: none; padding: 0; min-width: 0; outline: 0; }
svg { display: block; flex: none; }

.hero { position: relative; height: 100vh; overflow: hidden; padding: 0 606px 0 498px; }
.frame { display: flex; height: 100%; border: 20px solid #1e2b54; border-bottom: 0; border-radius: 88px 88px 0 0; overflow: hidden; background: #f4f7fc; }
.sidebar { flex: none; width: 112px; padding: 31px 10px 0 0; background: #081131; display: flex; flex-direction: column; align-items: center; gap: 34px; }
.expand { width: 68px; height: 68px; border-radius: 12px; background: #3670f0; display: grid; place-items: center; }
.home { width: 82px; height: 82px; border-radius: 22px; background: #232c4a; display: grid; place-items: center; }
.main { flex: 1; min-width: 0; padding: 78px 60px 0 54px; display: flex; flex-direction: column; }

.top { display: flex; align-items: flex-end; }
.heading { flex: none; width: 536px; white-space: nowrap; }
.heading h1 { font-size: 47px; line-height: 56px; font-weight: 600; }
.heading p { margin-top: 10px; font-size: 23px; line-height: 31px; color: #8490a6; }
.filters { flex: 1; height: 82px; display: flex; align-items: center; gap: 14px; padding: 0 12px; background: #eaf2fd; border: 2px solid #d8e0ec; border-radius: 24px; }
.field { height: 60px; display: flex; align-items: center; gap: 16px; padding: 0 20px; background: #fff; border: 2px solid #d8e0ec; border-radius: 10px; font-size: 20px; color: #2c3348; }
.field input, .field select { flex: 1; width: 0; }
.field select { appearance: none; }
.depot { width: 290px; }
.date { width: 216px; }
.search { flex: 1; }
.field input::placeholder { color: #2c3348; opacity: 1; }
.views { flex: none; width: 273px; height: 56px; display: flex; align-items: center; gap: 18px; padding: 0 16px; background: #fff; border-radius: 10px; font-size: 17px; color: #6b7690; }
.view { display: flex; align-items: center; gap: 5px; }
.view.on { color: #3670f0; font-weight: 600; }
.sep { flex: none; width: 2px; height: 30px; background: #d8e0ec; }
.finish { flex: none; width: 297px; height: 82px; margin-left: 29px; border-radius: 24px; background: #0f0; color: #0a1440; font-size: 19px; font-weight: 600; }

.map { width: 100%; height: 513px; margin: 67px 0 23px; border-radius: 22px 22px 0 0; }
.geo path { vector-effect: non-scaling-stroke; }
.meadow { fill: #edf0d8; }
.wood { fill: #add19e; }
.wood .bright { fill: #b3e3a2; }
.water { fill: #aad3df; }
.river, .grey, .violet, .yellow, .salmon, .pink, .border, .route { fill: none; stroke-linejoin: round; }
.river { stroke: #aad3df; stroke-width: 2; }
.river.big { stroke-width: 7; }
.grey { stroke: #cdcbc8; stroke-width: 1; }
.violet { stroke: #d8cbd8; stroke-width: 1; }
.yellow { stroke: #f9cf99; stroke-width: 2; }
.salmon { stroke: #f7a896; stroke-width: 2; }
.pink { stroke: #e9799a; stroke-width: 2; }
.border { stroke: #9d9dbd; stroke-width: 3; }
.border.thin { stroke: #b3b3d0; stroke-width: 2; }
.route { stroke: #00737a; stroke-width: 5; }
.place text { font-family: "Noto Sans", sans-serif; font-size: 11px; text-anchor: middle; fill: #444; stroke: #fff; stroke-opacity: .6; stroke-width: 2px; paint-order: stroke; }
.place.city text { font-size: 14px; }
.place.lake text { font-style: italic; fill: #6d97cf; stroke-opacity: .3; }
.pins text { font-family: "Noto Sans", sans-serif; font-size: 13px; font-weight: 700; fill: #fff; text-anchor: middle; }

.panels { flex: 1; display: grid; grid-template-columns: minmax(0, 1fr) minmax(0, 1fr); gap: 16px; }
.panel { background: #fff; border: 2px solid #d8e0ec; border-bottom: 0; border-radius: 16px 16px 0 0; overflow: hidden; }
.tools { height: 59px; display: flex; align-items: center; border-bottom: 2px solid #d8e0ec; }
.orders { justify-content: flex-end; padding-right: 12px; }
.fleet { padding-left: 11px; }
.tab { flex: none; height: 42px; padding: 0 14px; border-radius: 10px; font-size: 14px; font-weight: 600; color: #2c3348; white-space: nowrap; }
.orders .tab { padding: 0 12px; font-size: 15px; }
.tab span { margin-left: 4px; color: #6b7690; font-weight: 500; }
.tab.active { background: #eaf2fd; color: #3670f0; }
.tab.active span { color: #3670f0; }
.find { flex: none; width: 260px; height: 46px; display: flex; align-items: center; gap: 12px; padding: 0 16px; border: 2px solid #d8e0ec; border-radius: 10px; font-size: 16px; }
.find input { flex: 1; width: 0; }
.find input::placeholder { color: #a9b1c0; opacity: 1; }
.orders .find { margin-left: 12px; }
.fleet .find { margin-left: auto; margin-right: 54px; }
.tool { margin-left: 19px; }
table { width: 100%; table-layout: fixed; border-collapse: separate; border-spacing: 0; font-size: 16px; color: #2c3348; }
th, td { height: 41px; padding: 0; text-align: left; white-space: nowrap; border-bottom: 2px solid #e4e9f1; }
th { height: 40px; color: #000; font-weight: 600; border-color: #d8e0ec; }
.grid-orders td { color: #454c60; font-weight: 400; }
.grid-orders td.num { color: #3670f0; }
.grid-orders td.load { color: #1c2233; }
.grid-orders input { appearance: none; display: block; width: 14px; height: 14px; margin: 0 0 0 13px; border: 2px solid #8b90a0; }
.num i { display: inline-block; width: 14px; height: 12px; margin-right: 7px; background: repeating-linear-gradient(#4c80f2 0 2px, #fff 2px 3px); }
.c-check { width: 63px; }
.c-num { width: 76px; }
.c-city { width: 234px; }
.c-date { width: 146px; }
.c-load { width: 34px; }
.f-lead { width: 66px; }
.f-plate { width: 238px; }
.f-load { width: 169px; }
.f-state { width: 181px; }
td.muted { color: #b4b8c2; }

.card { position: absolute; background: #fff; border: 2px solid #e2e9f3; border-radius: 32px; box-shadow: 0 8px 60px rgba(0, 0, 0, .1); }
.card h2 { font-weight: 500; white-space: nowrap; }
.legend { color: #7e8a9f; }
.legend li { display: flex; align-items: center; white-space: nowrap; }
.dot { flex: none; border-radius: 50%; }
.sky { background: #3b82f6; }
.emerald { background: #10b981; }
.amber { background: #f59e0b; }
.red { background: #ef4444; }
.blue { background: #3670f0; }
.green { background: #30c872; }
.purple { background: #a855f7; }
.cyan { background: #06b6d4; }

.distance { left: 64px; top: 236px; width: 649px; height: 440px; border: 0; }
.distance h2 { padding: 39px 0 0 38px; font-size: 28px; line-height: 36px; color: #06064a; }
.bars { width: 100%; }
.axis-y text { font-size: 18px; fill: #5a6478; text-anchor: end; }
.axis-x text { font-size: 15px; fill: #5a6478; text-anchor: end; }

.reasons { left: 298px; top: 651px; width: 549px; height: 352px; display: flex; justify-content: space-between; padding: 48px 28px 0 38px; }
.reasons h2 { font-size: 24px; line-height: 32px; }
.reasons > div { width: 0; }
.reasons .legend { margin-top: 34px; font-size: 20px; line-height: 39px; }
.reasons .dot { width: 14px; height: 14px; margin-right: 10px; }
.reasons .donut { margin-top: 36px; }

.status { right: 225px; top: 306px; width: 654px; height: 411px; display: flex; justify-content: space-between; padding: 48px 58px 0 46px; }
.status h2 { font-size: 28px; line-height: 40px; }
.status .legend { margin: 50px 0 0 30px; font-size: 24px; line-height: 46px; }
.status > div { width: 0; }
.status .dot { width: 16px; height: 16px; margin-right: 10px; }
.status .donut { margin-top: 51px; }

.events { right: 439px; top: 690px; width: 503px; height: 400px; padding: 37px 35px 0; }
.events h2 { font-size: 24px; line-height: 34px; }
.hbars { margin-top: 38px; display: grid; gap: 16px; }
.hbar { height: 28px; border-radius: 0 6px 6px 0; }
.scale { display: flex; justify-content: space-between; margin: 31px 6px 0 0; font-size: 18px; line-height: 24px; color: #7e8a9f; }
.events .legend { margin-top: 24px; display: flex; flex-wrap: wrap; justify-content: center; column-gap: 24px; font-size: 17px; line-height: 31px; }
.events .dot { width: 13px; height: 13px; margin-right: 10px; }
```
